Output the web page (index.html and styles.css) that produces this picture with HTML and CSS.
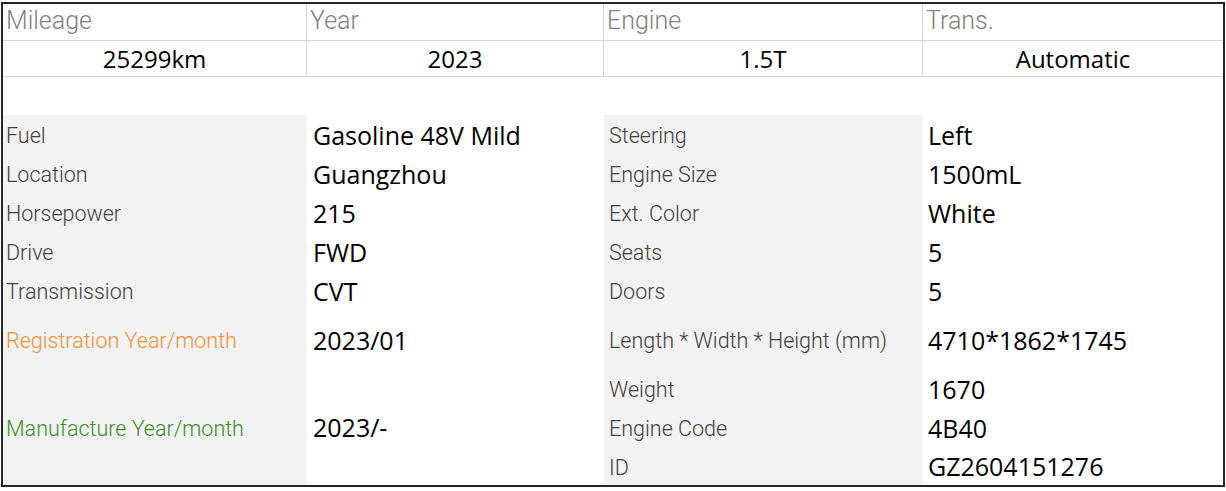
FILE: index.html
```html
<!DOCTYPE html>
<html>
<head>
<meta charset="utf-8">
<link rel="stylesheet" href="styles.css">
</head>
<body>
<div class="sheet">
  <div class="head">
    <div class="hcell hlabel">Mileage</div>
    <div class="hcell hlabel">Year</div>
    <div class="hcell hlabel">Engine</div>
    <div class="hcell hlabel last">Trans.</div>
    <div class="hcell hval">25299km</div>
    <div class="hcell hval">2023</div>
    <div class="hcell hval">1.5T</div>
    <div class="hcell hval last">Automatic</div>
  </div>
  <div class="spacer"></div>
  <div class="specs">
    <div class="lab c1 r1">Fuel</div>
    <div class="val c2 r1">Gasoline 48V Mild</div>
    <div class="lab c3 r1">Steering</div>
    <div class="val c4 r1">Left</div>

    <div class="lab c1 r2">Location</div>
    <div class="val c2 r2">Guangzhou</div>
    <div class="lab c3 r2">Engine Size</div>
    <div class="val c4 r2">1500mL</div>

    <div class="lab c1 r3">Horsepower</div>
    <div class="val c2 r3">215</div>
    <div class="lab c3 r3">Ext. Color</div>
    <div class="val c4 r3">White</div>

    <div class="lab c1 r4">Drive</div>
    <div class="val c2 r4">FWD</div>
    <div class="lab c3 r4">Seats</div>
    <div class="val c4 r4">5</div>

    <div class="lab c1 r5">Transmission</div>
    <div class="val c2 r5">CVT</div>
    <div class="lab c3 r5">Doors</div>
    <div class="val c4 r5">5</div>

    <div class="lab c1 r6 reg">Registration Year/month</div>
    <div class="val c2 r6">2023/01</div>
    <div class="lab c3 r6">Length * Width * Height (mm)</div>
    <div class="val c4 r6">4710*1862*1745</div>

    <div class="lab c1 r7 span3 mfg">Manufacture Year/month</div>
    <div class="val c2 r7 span3">2023/-</div>
    <div class="lab c3 r7">Weight</div>
    <div class="val c4 r7">1670</div>

    <div class="lab c3 r8">Engine Code</div>
    <div class="val c4 r8">4B40</div>

    <div class="lab c3 r9">ID</div>
    <div class="val c4 r9">GZ2604151276</div>
  </div>
</div>
</body>
</html>
```

FILE: styles.css
```css
html, body {
  margin: 0;
  padding: 0;
  background: #ffffff;
}

body {
  font-family: "Open Sans", "Noto Sans", "Liberation Sans", sans-serif;
}

.sheet {
  margin: 2px 0 0 1px;
  width: 1220px;
  border: 2px solid #262626;
  background: #ffffff;
}

.head {
  display: grid;
  grid-template-columns: 304px 297px 319px 300px;
  grid-template-rows: 37px 36px;
}

.hcell {
  border-right: 1px solid #d6d6d6;
  border-bottom: 1px solid #d6d6d6;
  display: flex;
  align-items: center;
  white-space: nowrap;
  overflow: hidden;
}

.hcell.last {
  border-right: none;
}

.hlabel {
  font-family: Roboto, "Open Sans", sans-serif;
  font-weight: 300;
  font-size: 25px;
  color: #808080;
  padding-left: 3px;
  padding-bottom: 4px;
}

.hval {
  justify-content: center;
  font-size: 24px;
  color: #000000;
}

.spacer {
  height: 38px;
}

.specs {
  display: grid;
  grid-template-columns: 304px 297px 319px 300px;
  grid-template-rows: 39px 39px 39px 39px 39px 59px 39px 39px 38px;
}

.lab {
  background: #f2f2f2;
  font-family: Roboto, "Open Sans", sans-serif;
  font-weight: 300;
  font-size: 21.5px;
  color: #404040;
  padding-left: 3px;
  padding-top: 2px;
  display: flex;
  align-items: center;
  white-space: nowrap;
}

.val {
  font-size: 25px;
  color: #000000;
  padding-left: 6px;
  display: flex;
  align-items: center;
  white-space: nowrap;
}

.c1 { grid-column: 1; }
.c2 { grid-column: 2; }
.c3 { grid-column: 3; padding-left: 5px; }
.c4 { grid-column: 4; padding-left: 5px; }

.r1 { grid-row: 1; }
.r2 { grid-row: 2; }
.r3 { grid-row: 3; }
.r4 { grid-row: 4; }
.r5 { grid-row: 5; }
.r6 { grid-row: 6; }
.r7 { grid-row: 7; }
.r8 { grid-row: 8; }
.r9 { grid-row: 9; }
.span3 { grid-row: 7 / span 3; }

.reg { color: #f0913a; }
.mfg { color: #3d8c2a; }
```
